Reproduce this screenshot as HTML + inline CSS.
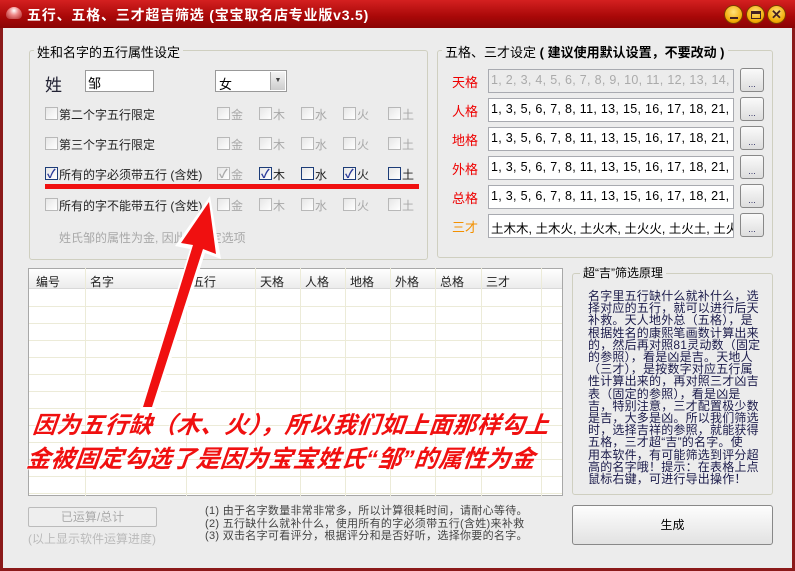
<!DOCTYPE html>
<html><head><meta charset="utf-8"><style>
*{margin:0;padding:0;box-sizing:border-box}
body{width:795px;height:571px;overflow:hidden;background:#8b1a1a;font-family:"Liberation Sans","Noto Sans CJK SC",sans-serif;font-size:12px;color:#000;position:relative}
.a{position:absolute}
#title{left:0;top:0;width:795px;height:28px;background:linear-gradient(#d42020,#a80808 60%,#8a0404)}
#body{left:3px;top:28px;width:789px;height:540px;background:#ececec}
.grp{border:1px solid #cfcfc0;border-radius:3px}
.gt{background:#ececec;padding:0 3px;font-size:13px}
.cb{width:13px;height:13px;border:1px solid #b8b8b8;background:linear-gradient(135deg,#e6e6e6,#fff)}
.cbx{border-color:#1c3c78}
.chk{position:absolute;left:1px;top:-3px;font-size:12px;color:#2a3a9a;font-weight:bold}
.lbl{font-size:12px;color:#222}
.dis{color:#a8a8a8}
.inp{background:#fff;border:1px solid #a8aab0;height:24px;font-size:12.5px;padding:3px 0 0 2px;white-space:nowrap;overflow:hidden;width:246px;left:488px;letter-spacing:0.3px}
.btn{left:740px;width:24px;height:24px;border:1px solid #888;border-radius:3px;background:linear-gradient(#fafafa,#ddd);font-size:9px;color:#336;text-align:center;line-height:30px}
.rl{left:452px;font-size:13px;color:#e00}
.hd{font-size:12px;color:#222;top:273px}
.circ{width:19px;height:19px;border-radius:50%;background:radial-gradient(circle at 50% 35%,#ffe27a,#f0a800 70%,#b06a00);border:1px solid #7a3a00}
.big{position:absolute;color:#f01010;font-style:italic;font-weight:bold;white-space:nowrap;text-shadow:0 0 2px #fff,0 0 2px #fff,0 0 2px #fff;transform:skewX(-6deg)}
</style></head><body>
<div class="a" id="title"></div>
<div class="a" style="left:6px;top:7px;width:16px;height:12px;border-radius:8px 8px 4px 4px;background:radial-gradient(circle at 50% 30%,#fff,#e88 40%,#a22)"></div>
<div class="a" style="left:27px;top:5px;color:#fff;font-weight:bold;font-size:14px;letter-spacing:0.8px">五行、五格、三才超吉筛选 (宝宝取名店专业版v3.5)</div>
<div class="a circ" style="left:724px;top:5px"><div class="a" style="left:5px;top:11px;width:8px;height:2px;background:#422"></div></div>
<div class="a circ" style="left:746px;top:5px"><div class="a" style="left:4px;top:5px;width:10px;height:8px;border:1px solid #422;border-top-width:3px"></div></div>
<div class="a circ" style="left:767px;top:5px;color:#422;font-weight:bold;font-size:13px;text-align:center;line-height:17px">✕</div>
<div class="a" id="body"></div>

<div class="a grp" style="left:29px;top:50px;width:399px;height:210px"></div>
<div class="a gt" style="left:34px;top:42px">姓和名字的五行属性设定</div>
<div class="a" style="left:45px;top:71px;font-size:17px;color:#223">姓</div>
<div class="a" style="left:85px;top:70px;width:69px;height:22px;border:1px solid #999;background:#fff;padding:2px 0 0 2px;font-size:13px">邹</div>
<div class="a" style="left:215px;top:70px;width:72px;height:22px;border:1px solid #999;background:#fff;padding:3px 0 0 3px;font-size:13px">女</div>
<div class="a" style="left:270px;top:72px;width:15px;height:18px;background:linear-gradient(#f4f4f4,#ccc);border-left:1px solid #aaa;font-size:7px;text-align:center;line-height:18px;color:#444">▼</div>

<div class="a cb" style="left:45px;top:107px"></div><div class="a lbl" style="left:59px;top:106px">第二个字五行限定</div>
<div class="a cb" style="left:45px;top:137px"></div><div class="a lbl" style="left:59px;top:136px">第三个字五行限定</div>
<div class="a cb cbx" style="left:45px;top:167px"><span class="chk">✓</span></div><div class="a lbl" style="left:59px;top:166px">所有的字必须带五行 (含姓)</div>
<div class="a cb" style="left:45px;top:198px"></div><div class="a lbl" style="left:59px;top:197px">所有的字不能带五行 (含姓)</div>

<div class="a" style="left:217px;top:107px;width:210px;height:120px">
 <div class="a cb" style="left:0;top:0"></div><div class="a lbl dis" style="left:14px;top:-1px">金</div>
 <div class="a cb" style="left:42px;top:0"></div><div class="a lbl dis" style="left:56px;top:-1px">木</div>
 <div class="a cb" style="left:84px;top:0"></div><div class="a lbl dis" style="left:98px;top:-1px">水</div>
 <div class="a cb" style="left:126px;top:0"></div><div class="a lbl dis" style="left:140px;top:-1px">火</div>
 <div class="a cb" style="left:171px;top:0"></div><div class="a lbl dis" style="left:185px;top:-1px">土</div>

 <div class="a cb" style="left:0;top:30px"></div><div class="a lbl dis" style="left:14px;top:29px">金</div>
 <div class="a cb" style="left:42px;top:30px"></div><div class="a lbl dis" style="left:56px;top:29px">木</div>
 <div class="a cb" style="left:84px;top:30px"></div><div class="a lbl dis" style="left:98px;top:29px">水</div>
 <div class="a cb" style="left:126px;top:30px"></div><div class="a lbl dis" style="left:140px;top:29px">火</div>
 <div class="a cb" style="left:171px;top:30px"></div><div class="a lbl dis" style="left:185px;top:29px">土</div>

 <div class="a cb" style="left:0;top:60px"><span class="chk" style="color:#aaa">✓</span></div><div class="a lbl dis" style="left:14px;top:59px">金</div>
 <div class="a cb cbx" style="left:42px;top:60px"><span class="chk">✓</span></div><div class="a lbl" style="left:56px;top:59px">木</div>
 <div class="a cb cbx" style="left:84px;top:60px"></div><div class="a lbl" style="left:98px;top:59px">水</div>
 <div class="a cb cbx" style="left:126px;top:60px"><span class="chk">✓</span></div><div class="a lbl" style="left:140px;top:59px">火</div>
 <div class="a cb cbx" style="left:171px;top:60px"></div><div class="a lbl" style="left:185px;top:59px">土</div>

 <div class="a cb" style="left:0;top:91px"></div><div class="a lbl dis" style="left:14px;top:90px">金</div>
 <div class="a cb" style="left:42px;top:91px"></div><div class="a lbl dis" style="left:56px;top:90px">木</div>
 <div class="a cb" style="left:84px;top:91px"></div><div class="a lbl dis" style="left:98px;top:90px">水</div>
 <div class="a cb" style="left:126px;top:91px"></div><div class="a lbl dis" style="left:140px;top:90px">火</div>
 <div class="a cb" style="left:171px;top:91px"></div><div class="a lbl dis" style="left:185px;top:90px">土</div>
</div>
<div class="a" style="left:45px;top:184px;width:374px;height:5px;background:#f01010"></div>
<div class="a lbl dis" style="left:59px;top:229px">姓氏邹的属性为金, 因此为固定选项</div>

<div class="a grp" style="left:437px;top:50px;width:336px;height:208px"></div>
<div class="a gt" style="left:442px;top:42px">五格、三才设定 <b>( 建议使用默认设置，不要改动 )</b></div>
<div class="a rl" style="top:72px">天格</div>
<div class="a rl" style="top:101px">人格</div>
<div class="a rl" style="top:130px">地格</div>
<div class="a rl" style="top:159px">外格</div>
<div class="a rl" style="top:188px">总格</div>
<div class="a rl" style="top:217px;color:#f39000">三才</div>
<div class="a inp" style="top:69px;background:#ececec;color:#aaa">1, 2, 3, 4, 5, 6, 7, 8, 9, 10, 11, 12, 13, 14, 15, 16, 17</div>
<div class="a inp" style="top:98px">1, 3, 5, 6, 7, 8, 11, 13, 15, 16, 17, 18, 21, 23, 24, 25</div>
<div class="a inp" style="top:127px">1, 3, 5, 6, 7, 8, 11, 13, 15, 16, 17, 18, 21, 23, 24, 25</div>
<div class="a inp" style="top:156px">1, 3, 5, 6, 7, 8, 11, 13, 15, 16, 17, 18, 21, 23, 24, 25</div>
<div class="a inp" style="top:185px">1, 3, 5, 6, 7, 8, 11, 13, 15, 16, 17, 18, 21, 23, 24, 25</div>
<div class="a inp" style="top:214px;letter-spacing:0">土木木, 土木火, 土火木, 土火火, 土火土, 土火金</div>
<div class="a btn" style="top:68px">...</div>
<div class="a btn" style="top:97px">...</div>
<div class="a btn" style="top:126px">...</div>
<div class="a btn" style="top:155px">...</div>
<div class="a btn" style="top:184px">...</div>
<div class="a btn" style="top:213px">...</div>

<div class="a" style="left:28px;top:268px;width:535px;height:228px;border:1px solid #a8a8a8;background:#fff;background-image:repeating-linear-gradient(#fff 0 16px,#ecebd8 16px 17px);background-position:0 21px"></div>
<div class="a" style="left:29px;top:269px;width:533px;height:20px;background:linear-gradient(#fff,#ececec);border-bottom:1px solid #d8d8d8"></div>
<svg class="a" style="left:28px;top:268px" width="535" height="228"><g stroke="#ecebd8">
<line x1="57.5" y1="0" x2="57.5" y2="228"/><line x1="158.5" y1="0" x2="158.5" y2="228"/><line x1="227.5" y1="0" x2="227.5" y2="228"/><line x1="272.5" y1="0" x2="272.5" y2="228"/><line x1="317.5" y1="0" x2="317.5" y2="228"/><line x1="362.5" y1="0" x2="362.5" y2="228"/><line x1="407.5" y1="0" x2="407.5" y2="228"/><line x1="453.5" y1="0" x2="453.5" y2="228"/><line x1="513.5" y1="0" x2="513.5" y2="228"/></g></svg>
<div class="a hd" style="left:36px">编号</div>
<div class="a hd" style="left:90px">名字</div>
<div class="a hd" style="left:192px">五行</div>
<div class="a hd" style="left:260px">天格</div>
<div class="a hd" style="left:305px">人格</div>
<div class="a hd" style="left:350px">地格</div>
<div class="a hd" style="left:395px">外格</div>
<div class="a hd" style="left:440px">总格</div>
<div class="a hd" style="left:486px">三才</div>

<svg class="a" style="left:0;top:0" width="795" height="571">
<polygon points="210,196 221,259 205,253 155,410 140,410 190,249 175,246" fill="#fff"/>
<polygon points="209,202 216,254 203,249 152,407 143,407 193,245 181,243" fill="#f01010"/>
</svg>

<div class="big" style="left:33px;top:406px;font-size:23.5px;letter-spacing:0.5px">因为五行缺（木、火），所以我们如上面那样勾上</div>
<div class="big" style="left:27px;top:439px;font-size:24px;letter-spacing:0.2px">金被固定勾选了是因为宝宝姓氏“邹”的属性为金</div>

<div class="a grp" style="left:572px;top:273px;width:201px;height:222px"></div>
<div class="a gt" style="left:580px;top:264px;font-size:12px">超“吉”筛选原理</div>
<div class="a" style="left:588px;top:290px;font-size:12px;line-height:12.2px;color:#1a1a4a;white-space:nowrap;letter-spacing:0.2px">名字里五行缺什么就补什么，选<br>择对应的五行，就可以进行后天<br>补救。天人地外总（五格），是<br>根据姓名的康熙笔画数计算出来<br>的，然后再对照81灵动数（固定<br>的参照），看是凶是吉。天地人<br>（三才），是按数字对应五行属<br>性计算出来的，再对照三才凶吉<br>表（固定的参照），看是凶是<br>吉，特别注意，三才配置极少数<br>是吉，大多是凶。所以我们筛选<br>时，选择吉祥的参照，就能获得<br>五格，三才超“吉”的名字。使<br>用本软件，有可能筛选到评分超<br>高的名字哦！提示：在表格上点<br>鼠标右键，可进行导出操作！</div>

<div class="a" style="left:28px;top:507px;width:129px;height:20px;border:1px solid #bbb;border-radius:2px;background:#eee;color:#aaa;text-align:center;line-height:18px">已运算/总计</div>
<div class="a" style="left:28px;top:530px;color:#bbb;font-size:12px">(以上显示软件运算进度)</div>
<div class="a" style="left:205px;top:505px;font-size:11px;line-height:12.5px;color:#444;white-space:nowrap;letter-spacing:0.3px">(1) 由于名字数量非常非常多，所以计算很耗时间，请耐心等待。<br>(2) 五行缺什么就补什么，使用所有的字必须带五行(含姓)来补救<br>(3) 双击名字可看评分，根据评分和是否好听，选择你要的名字。</div>
<div class="a" style="left:572px;top:505px;width:201px;height:40px;border:1px solid #888;border-radius:3px;background:linear-gradient(#fdfdfd,#e2e2e2);text-align:center;line-height:38px;font-size:12px">生成</div>
</body></html>
